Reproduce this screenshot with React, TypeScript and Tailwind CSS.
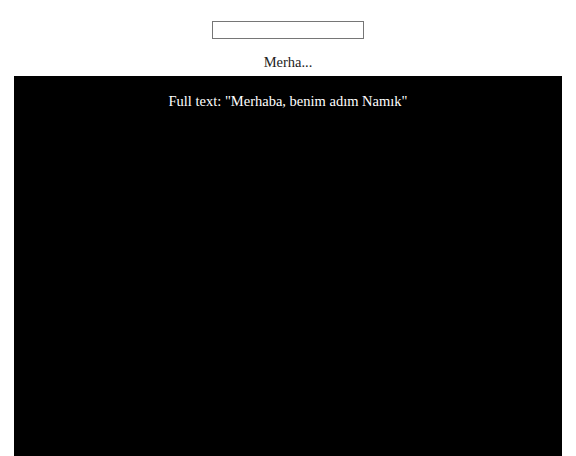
import { ReactElement } from 'react';

const fullText = 'Merhaba, benim adım Namık';

export default function App(): ReactElement {
  return (
    <div className="min-h-[456px] bg-white font-['Liberation_Serif',serif] text-[14.5px] text-black">
      <div className="flex flex-col items-center pt-[21px]">
        <input
          type="text"
          className="h-[18px] w-[152px] border border-[#767676] bg-white px-[2px] text-[13px] outline-none"
        />
        <p className="mt-[14px] h-[18px] leading-[18px] text-[#222]">{fullText.slice(0, 5)}...</p>
      </div>
      <div className="mx-[14px] mt-[5px] h-[400px] bg-black pt-[16px] text-center text-white">
        <p className="leading-[18px]">Full text: "{fullText}"</p>
      </div>
    </div>
  );
}
